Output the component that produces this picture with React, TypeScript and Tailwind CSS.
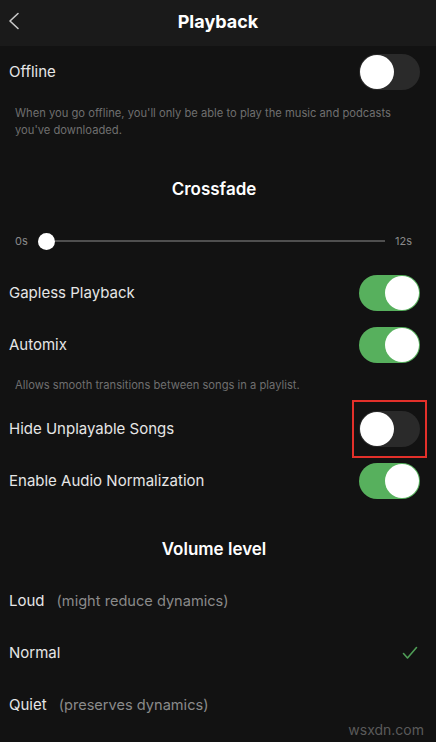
import { useState } from "react"

function Toggle({ on, onChange }: { on: boolean; onChange?: () => void }) {
  return (
    <button
      onClick={onChange}
      className={`flex items-center w-[61px] h-[36px] rounded-full p-[1px] ${on ? "bg-[#57b05d] justify-end" : "bg-[#2a2a2a] justify-start"}`}
    >
      <span className="block size-[34px] rounded-full bg-white" />
    </button>
  )
}

function SwitchRow({ label, on, highlight }: { label: string; on: boolean; highlight?: boolean }) {
  const [value, setValue] = useState(on)
  return (
    <div className="flex items-center justify-between h-[52px] pl-[9px] pr-[16px]">
      <span className="text-[15px] text-[#e6e6e6]">{label}</span>
      {highlight ? (
        <div className="-mr-[7px] border-2 border-[#e3302a] px-[5px] py-[9px]">
          <Toggle on={value} onChange={() => setValue(!value)} />
        </div>
      ) : (
        <Toggle on={value} onChange={() => setValue(!value)} />
      )}
    </div>
  )
}

function Note({ children }: { children: string }) {
  return <p className="px-[15px] text-[11.2px] leading-[17px] text-[#6f6f6f]">{children}</p>
}

function SectionTitle({ children }: { children: string }) {
  return <h2 className="text-center text-[17px] leading-[24px] font-semibold text-white">{children}</h2>
}

const volumeLevels = [
  { name: "Loud", hint: "(might reduce dynamics)" },
  { name: "Normal", hint: "" },
  { name: "Quiet", hint: "(preserves dynamics)" },
]

export default function App() {
  const [volume, setVolume] = useState("Normal")

  return (
    <div className="relative w-[436px] h-[742px] overflow-hidden bg-[#121212] font-['Inter',sans-serif]">
      <header className="grid grid-cols-[40px_1fr_40px] items-center h-[46px] pb-[4px] bg-[#1a1a1a]">
        <svg width="14" height="18" viewBox="0 0 14 18" className="ml-[7px]">
          <path d="M11 1.5 L3 9 L11 16.5" fill="none" stroke="#c9c9c9" strokeWidth="1.6" strokeLinecap="round" strokeLinejoin="round" />
        </svg>
        <h1 className="text-center text-[18px] font-bold text-white">Playback</h1>
        <span />
      </header>

      <SwitchRow label="Offline" on={false} />
      <div className="pt-[7px]">
        <Note>When you go offline, you'll only be able to play the music and podcasts you've downloaded.</Note>
      </div>

      <div className="pt-[38px] pr-[8px]">
        <SectionTitle>Crossfade</SectionTitle>
      </div>

      <div className="flex items-center gap-[10px] h-[40px] mt-[20px] pl-[15px] pr-[24px] text-[11px] text-[#8a8a8a]">
        <span>0s</span>
        <div className="flex flex-1 items-center">
          <span className="block size-[17px] rounded-full bg-white" />
          <span className="block flex-1 h-[2px] bg-[#4f4f4f]" />
        </div>
        <span>12s</span>
      </div>

      <div className="mt-[6px]">
        <SwitchRow label="Gapless Playback" on />
        <SwitchRow label="Automix" on />
      </div>
      <div className="h-[32px] pt-[6px]">
        <Note>Allows smooth transitions between songs in a playlist.</Note>
      </div>
      <SwitchRow label="Hide Unplayable Songs" on={false} highlight />
      <SwitchRow label="Enable Audio Normalization" on />

      <div className="pt-[30px] pb-[14px] pr-[8px]">
        <SectionTitle>Volume level</SectionTitle>
      </div>

      {volumeLevels.map(level => (
        <button
          key={level.name}
          onClick={() => setVolume(level.name)}
          className="flex w-full items-center justify-between h-[52px] pl-[9px] pr-[18px] text-left"
        >
          <span className="text-[15px]">
            <span className="text-[#e6e6e6]">{level.name}</span>
            {level.hint && <span className="ml-[12px] text-[14.6px] text-[#8a8a8a]">{level.hint}</span>}
          </span>
          {volume === level.name && (
            <svg width="16" height="14" viewBox="0 0 16 14">
              <path d="M1.5 7.5 L5.5 12 L14.5 1.5" fill="none" stroke="#4f9d56" strokeWidth="1.6" strokeLinecap="round" strokeLinejoin="round" />
            </svg>
          )}
        </button>
      ))}

      <span className="absolute right-[12px] bottom-[2px] text-[14px] text-[#5a5a5a]">wsxdn.com</span>
    </div>
  )
}
